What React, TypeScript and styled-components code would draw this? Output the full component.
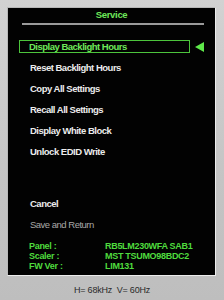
import styled, { createGlobalStyle } from 'styled-components';

const GlobalStyle = createGlobalStyle`
  html, body {
    margin: 0;
    padding: 0;
    background: #c5c5c5;
  }
  body {
    font-family: "Liberation Sans", Arial, sans-serif;
  }
`;

const menuItems = [
  'Display Backlight Hours',
  'Reset Backlight Hours',
  'Copy All Settings',
  'Recall All Settings',
  'Display White Block',
  'Unlock EDID Write',
];

const info = [
  ['Panel :', 'RB5LM230WFA SAB1'],
  ['Scaler :', 'MST TSUMO98BDC2'],
  ['FW Ver :', 'LIM131'],
];

export default function App() {
  return (
    <Screen>
      <GlobalStyle />
      <Osd>
        <Title>Service</Title>
        <Rule />
        <Menu>
          {menuItems.map((item, i) => (
            <Row key={item}>
              <Item $active={i === 0}>{item}</Item>
              {i === 0 && <Arrow />}
            </Row>
          ))}
        </Menu>
        <Actions>
          <Row>
            <Item>Cancel</Item>
          </Row>
          <Row>
            <Item $dim>Save and Return</Item>
          </Row>
        </Actions>
        <Info>
          {info.map(([k, v]) => (
            <InfoRow key={k}>
              <span>{k}</span>
              <span>{v}</span>
            </InfoRow>
          ))}
        </Info>
      </Osd>
      <Freq>H= 68kHz&nbsp; V= 60Hz</Freq>
    </Screen>
  );
}

const Screen = styled.div`
  width: 224px;
  height: 300px;
  box-sizing: border-box;
  padding: 7px 7px 0 7px;
  background: linear-gradient(180deg, #d2d2d2 0%, #c4c4c4 60%, #bebebe 100%);
  display: flex;
  flex-direction: column;
`;

const Osd = styled.div`
  width: 209px;
  height: 269px;
  box-sizing: border-box;
  background: #020202;
  border: 1px solid #ececec;
  border-left-color: #b8b8b8;
  border-top-color: #b8b8b8;
  display: flex;
  flex-direction: column;
  padding: 1px 0 0 0;
`;

const Title = styled.div`
  color: #6ee85a;
  font-weight: bold;
  font-size: 9.5px;
  text-align: center;
  height: 12px;
  line-height: 12px;
  letter-spacing: -0.3px;
`;

const Rule = styled.div`
  height: 2px;
  margin: 2px 11px 0 14px;
  background: #9a9a9a;
`;

const Menu = styled.div`
  display: flex;
  flex-direction: column;
  gap: 8px;
  margin-top: 15px;
`;

const Actions = styled.div`
  display: flex;
  flex-direction: column;
  gap: 8px;
  margin-top: 39px;
`;

const Row = styled.div`
  display: flex;
  align-items: center;
  height: 13px;
`;

const Item = styled.div<{ $active?: boolean; $dim?: boolean }>`
  box-sizing: border-box;
  width: ${(p) => (p.$active ? '171px' : 'auto')};
  height: 13px;
  line-height: 11px;
  margin-left: 11px;
  padding-left: ${(p) => (p.$active ? '9px' : '10px')};
  border: 1px solid ${(p) => (p.$active ? '#4cc43c' : 'transparent')};
  color: ${(p) => (p.$active ? '#6ee85a' : p.$dim ? '#a8a8a8' : '#ececec')};
  font-weight: ${(p) => (p.$dim ? 'normal' : 'bold')};
  font-size: 9.5px;
  letter-spacing: -0.5px;
  white-space: nowrap;
`;

const Arrow = styled.div`
  width: 0;
  height: 0;
  margin-left: 5px;
  border-top: 5px solid transparent;
  border-bottom: 5px solid transparent;
  border-right: 9px solid #5ee84a;
`;

const Info = styled.div`
  display: flex;
  flex-direction: column;
  margin-top: 10px;
`;

const InfoRow = styled.div`
  display: grid;
  grid-template-columns: 76px 1fr;
  padding-left: 21px;
  height: 10px;
  line-height: 10px;
  color: #4fdc3e;
  font-weight: bold;
  font-size: 9px;
  letter-spacing: -0.3px;
  white-space: nowrap;
`;

const Freq = styled.div`
  margin-top: 9px;
  text-align: center;
  color: #2a2a2a;
  font-size: 9px;
  letter-spacing: -0.2px;
`;
